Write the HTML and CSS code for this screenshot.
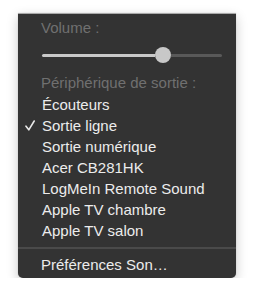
FILE: index.html
```html
<!DOCTYPE html>
<html lang="fr">
<head>
<meta charset="utf-8">
<link rel="stylesheet" href="styles.css">
</head>
<body>
<div class="menu">
  <div class="label label-volume">Volume :</div>
  <div class="slider">
    <div class="fill"></div>
    <div class="thumb"></div>
    <div class="rest"></div>
  </div>
  <div class="label label-output">Périphérique de sortie :</div>
  <ul class="items">
    <li class="item">Écouteurs</li>
    <li class="item checked"><svg class="check" viewBox="0 0 10 11" width="10" height="11"><path d="M1 6.2 L3.8 9.8 L9.2 1" fill="none" stroke="#e8e8e8" stroke-width="1.6" stroke-linecap="round" stroke-linejoin="round"/></svg>Sortie ligne</li>
    <li class="item">Sortie numérique</li>
    <li class="item">Acer CB281HK</li>
    <li class="item">LogMeIn Remote Sound</li>
    <li class="item">Apple TV chambre</li>
    <li class="item">Apple TV salon</li>
  </ul>
  <div class="sep"></div>
  <div class="item prefs">Préférences Son…</div>
</div>
</body>
</html>
```
FILE: styles.css
```css
html, body {
  margin: 0;
  padding: 0;
  background: #ffffff;
}
body {
  padding: 13px 0 0 18px;
  font-family: "Liberation Sans", Arial, sans-serif;
  font-size: 15px;
}
.menu {
  width: 218px;
  height: 265px;
  box-sizing: border-box;
  background: #333333;
  border-top: 1px solid #a9a9a9;
  border-radius: 0 0 5px 5px;
  box-shadow: 0 4px 12px rgba(0, 0, 0, 0.22), 0 0 1px rgba(0, 0, 0, 0.3);
  padding-top: 5px;
}
.label {
  color: #707070;
  line-height: 17px;
  padding-left: 23px;
}
.slider {
  display: flex;
  align-items: center;
  height: 16px;
  margin-top: 11px;
  padding: 0 14px 0 24px;
}
.fill {
  width: 113px;
  height: 3px;
  background: #c9c9c9;
  border-radius: 2px 0 0 2px;
}
.thumb {
  width: 16px;
  height: 16px;
  border-radius: 50%;
  background: #c8c8c8;
  flex: none;
}
.rest {
  flex: 1;
  height: 3px;
  background: #595959;
  border-radius: 0 2px 2px 0;
}
.label-output {
  margin-top: 11px;
}
.items {
  list-style: none;
  margin: 3px 0 0;
  padding: 0;
}
.item {
  color: #ececec;
  line-height: 21px;
  padding-left: 24px;
  position: relative;
}
.check {
  position: absolute;
  left: 7px;
  top: 5px;
}
.sep {
  height: 2px;
  background: #4a4a4a;
  margin: 6px 0 5px;
}
.prefs {
  padding-left: 23px;
}
```
